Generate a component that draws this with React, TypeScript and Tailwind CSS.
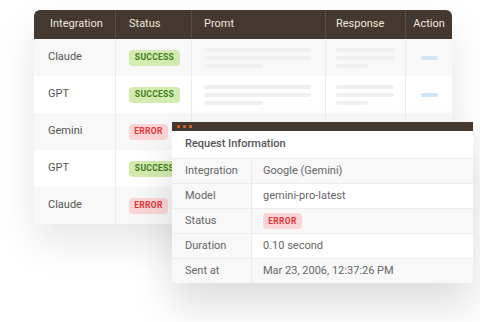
import React from "react";

type Row = { name: string; ok: boolean };
const rows: Row[] = [
  { name: "Claude", ok: true },
  { name: "GPT", ok: true },
  { name: "Gemini", ok: false },
  { name: "GPT", ok: true },
  { name: "Claude", ok: false },
];

function Badge({ ok }: { ok: boolean }) {
  return ok ? (
    <span className="inline-flex h-[16px] w-[51px] items-center justify-center rounded-[4px] bg-[#d3ebaf] text-[8.5px] font-bold tracking-[0.3px] text-[#3f7d1d]">
      SUCCESS
    </span>
  ) : (
    <span className="inline-flex h-[16px] w-[39px] items-center justify-center rounded-[4px] bg-[#fcd6d6] text-[8.5px] font-bold tracking-[0.3px] text-[#e5323b]">
      ERROR
    </span>
  );
}

function Lines({ w, short }: { w: number; short: number }) {
  return (
    <div className="flex flex-col gap-[4px]">
      <div className="h-[4px] rounded-full bg-[#f0f0f0]" style={{ width: w }} />
      <div className="h-[4px] rounded-full bg-[#f0f0f0]" style={{ width: w }} />
      <div className="h-[4px] rounded-full bg-[#f0f0f0]" style={{ width: short }} />
    </div>
  );
}

export default function App() {
  const info: [string, React.ReactNode][] = [
    ["Integration", "Google (Gemini)"],
    ["Model", "gemini-pro-latest"],
    ["Status", <Badge ok={false} />],
    ["Duration", "0.10 second"],
    ["Sent at", "Mar 23, 2006, 12:37:26 PM"],
  ];
  return (
    <div
      className="relative h-[322px] w-[480px] overflow-hidden bg-white"
      style={{ fontFamily: "Roboto, 'Noto Sans', sans-serif" }}
    >
      <div className="ml-[34px] mt-[10px] w-[418px] overflow-hidden rounded-t-[6px] bg-white shadow-[0_18px_40px_rgba(0,0,0,0.10)]">
        <div className="flex h-[29px] items-center bg-[#45392f] text-[11px] text-[#eee6dd]">
          <div className="flex h-full w-[82px] items-center border-r border-[#5a4e44] pl-[16px]">Integration</div>
          <div className="flex h-full w-[76px] items-center border-r border-[#5a4e44] pl-[13px]">Status</div>
          <div className="flex h-full w-[134px] items-center border-r border-[#5a4e44] pl-[12px]">Promt</div>
          <div className="flex h-full w-[80px] items-center border-r border-[#5a4e44] pl-[10px]">Response</div>
          <div className="flex h-full w-[46px] items-center justify-center">Action</div>
        </div>
        {rows.map((r, i) => (
          <div
            key={i}
            className={`flex h-[37px] items-center text-[11px] text-[#555] ${i % 2 === 0 ? "bg-[#f8f8f8]" : "bg-white"}`}
          >
            <div className="flex h-full w-[82px] items-center border-r border-[#ececec] pl-[14px]">{r.name}</div>
            <div className="flex h-full w-[76px] items-center border-r border-[#ececec] pl-[13px]">
              <Badge ok={r.ok} />
            </div>
            <div className="flex h-full w-[134px] items-center border-r border-[#ececec] pl-[12px]">
              <Lines w={107} short={59} />
            </div>
            <div className="flex h-full w-[80px] items-center border-r border-[#ececec] pl-[10px]">
              <Lines w={58} short={32} />
            </div>
            <div className="flex h-full w-[46px] items-center justify-center">
              <div className="h-[4px] w-[17px] rounded-full bg-[#cfe5fa]" />
            </div>
          </div>
        ))}
      </div>

      <div className="absolute left-[172px] top-[122px] w-[301px] bg-white shadow-[0_22px_40px_rgba(0,0,0,0.14)]">
        <div className="flex h-[9px] items-center gap-[3px] bg-[#45392f] pl-[5px]">
          <span className="h-[3px] w-[3px] rounded-full bg-[#f26a1b]" />
          <span className="h-[3px] w-[3px] rounded-full bg-[#f26a1b]" />
          <span className="h-[3px] w-[3px] rounded-full bg-[#f26a1b]" />
        </div>
        <div className="flex h-[27px] items-center pl-[13px] text-[11px] font-medium text-[#555]">
          Request Information
        </div>
        {info.map(([k, v], i) => (
          <div
            key={k}
            className={`flex h-[25px] border-t border-[#ececec] text-[11px] text-[#666] ${i % 2 === 0 ? "bg-[#f8f8f8]" : "bg-white"}`}
          >
            <div className="flex h-full w-[80px] items-center border-r border-[#ececec] bg-[#f8f8f8] pl-[13px]">{k}</div>
            <div className="flex h-full flex-1 items-center pl-[11px]">{v}</div>
          </div>
        ))}
      </div>
    </div>
  );
}
